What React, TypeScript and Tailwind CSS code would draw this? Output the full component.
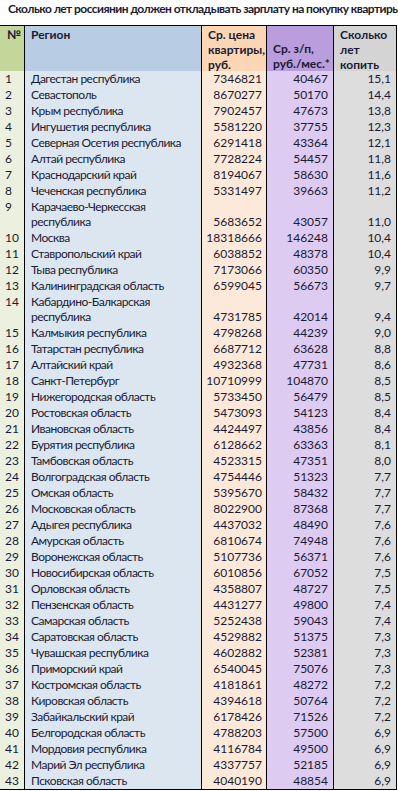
const rows: [number, string, number, number, string][] = [
  [1, "Дагестан республика", 7346821, 40467, "15,1"],
  [2, "Севастополь", 8670277, 50170, "14,4"],
  [3, "Крым республика", 7902457, 47673, "13,8"],
  [4, "Ингушетия республика", 5581220, 37755, "12,3"],
  [5, "Северная Осетия республика", 6291418, 43364, "12,1"],
  [6, "Алтай республика", 7728224, 54457, "11,8"],
  [7, "Краснодарский край", 8194067, 58630, "11,6"],
  [8, "Чеченская республика", 5331497, 39663, "11,2"],
  [9, "Карачаево-Черкесская|республика", 5683652, 43057, "11,0"],
  [10, "Москва", 18318666, 146248, "10,4"],
  [11, "Ставропольский край", 6038852, 48378, "10,4"],
  [12, "Тыва республика", 7173066, 60350, "9,9"],
  [13, "Калининградская область", 6599045, 56673, "9,7"],
  [14, "Кабардино-Балкарская|республика", 4731785, 42014, "9,4"],
  [15, "Калмыкия республика", 4798268, 44239, "9,0"],
  [16, "Татарстан республика", 6687712, 63628, "8,8"],
  [17, "Алтайский край", 4932368, 47731, "8,6"],
  [18, "Санкт-Петербург", 10710999, 104870, "8,5"],
  [19, "Нижегородская область", 5733450, 56479, "8,5"],
  [20, "Ростовская область", 5473093, 54123, "8,4"],
  [21, "Ивановская область", 4424497, 43856, "8,4"],
  [22, "Бурятия республика", 6128662, 63363, "8,1"],
  [23, "Тамбовская область", 4523315, 47351, "8,0"],
  [24, "Волгоградская область", 4754446, 51323, "7,7"],
  [25, "Омская область", 5395670, 58432, "7,7"],
  [26, "Московская область", 8022900, 87368, "7,7"],
  [27, "Адыгея республика", 4437032, 48490, "7,6"],
  [28, "Амурская область", 6810674, 74948, "7,6"],
  [29, "Воронежская область", 5107736, 56371, "7,6"],
  [30, "Новосибирская область", 6010856, 67052, "7,5"],
  [31, "Орловская область", 4358807, 48727, "7,5"],
  [32, "Пензенская область", 4431277, 49800, "7,4"],
  [33, "Самарская область", 5252438, 59043, "7,4"],
  [34, "Саратовская область", 4529882, 51375, "7,3"],
  [35, "Чувашская республика", 4602882, 52381, "7,3"],
  [36, "Приморский край", 6540045, 75076, "7,3"],
  [37, "Костромская область", 4181861, 48272, "7,2"],
  [38, "Кировская область", 4394618, 50764, "7,2"],
  [39, "Забайкальский край", 6178426, 71526, "7,2"],
  [40, "Белгородская область", 4788203, 57500, "6,9"],
  [41, "Мордовия республика", 4116784, 49500, "6,9"],
  [42, "Марий Эл республика", 4337757, 52185, "6,9"],
  [43, "Псковская область", 4040190, 48854, "6,9"],
];

const grid = "grid grid-cols-[25px_177px_65px_67px_63px] w-[397px]";

export default function App() {
  return (
    <div className="w-[398px] h-[791px] overflow-hidden bg-white text-[#1a1a33] font-['Lato',sans-serif] text-[12px]">
      {/* TITLE */}
      <div className="h-[25px] pl-[8px] pt-[1px] leading-[15px] font-bold tracking-[-0.55px] whitespace-nowrap overflow-hidden">
        Сколько лет россиянин должен откладывать зарплату на покупку квартиры
      </div>

      {/* TABLE */}
      <div className="border-t border-b border-black w-[397px]">
        {/* HEADER */}
        <div className={`${grid} h-[45px] border-b border-black font-bold leading-[15px]`}>
          <div className="bg-[#c4d79b] border-r border-black pl-[7px] pt-[1px]">№</div>
          <div className="bg-[#b8cce4] border-r border-black pl-[6px] pt-[1px]">Регион</div>
          <div className="bg-[#fcd5b4] border-r border-black pl-[6px] pt-[1px]">
            Ср. цена
            <br />
            квартиры,
            <br />
            руб.
          </div>
          <div className="bg-[#b99ddc] border-r border-black pl-[6px] flex flex-col justify-end pb-[1px]">
            <span>Ср. з/п,</span>
            <span>руб./мес.*</span>
          </div>
          <div className="bg-[#d4d4d4] border-r border-black pl-[6px] pt-[1px]">
            Сколько
            <br />
            лет
            <br />
            копить
          </div>
        </div>

        {/* DATA */}
        {rows.map(([n, region, price, salary, years]) => {
          const lines = region.split("|");
          const tall = lines.length > 1;
          return (
            <div key={n} className={`${grid} ${tall ? "h-[31px]" : "h-[16px]"} leading-[16px]`}>
              <div className="bg-[#ebf1de] border-r border-black pl-[5px]">{n}</div>
              <div className="bg-[#dce6f1] border-r border-black pl-[6px] leading-[15px] tracking-[-0.5px]">
                {lines.map((l) => (
                  <div key={l}>{l}</div>
                ))}
              </div>
              <div className="bg-[#fde9d9] border-r border-black pr-[4px] text-right flex items-end justify-end">
                {price}
              </div>
              <div className="bg-[#ddcbf1] border-r border-black pr-[5px] text-right flex items-end justify-end">
                {salary}
              </div>
              <div className="bg-[#dddddd] border-r border-black pr-[5px] text-right flex items-end justify-end">
                {years}
              </div>
            </div>
          );
        })}
      </div>
    </div>
  );
}
